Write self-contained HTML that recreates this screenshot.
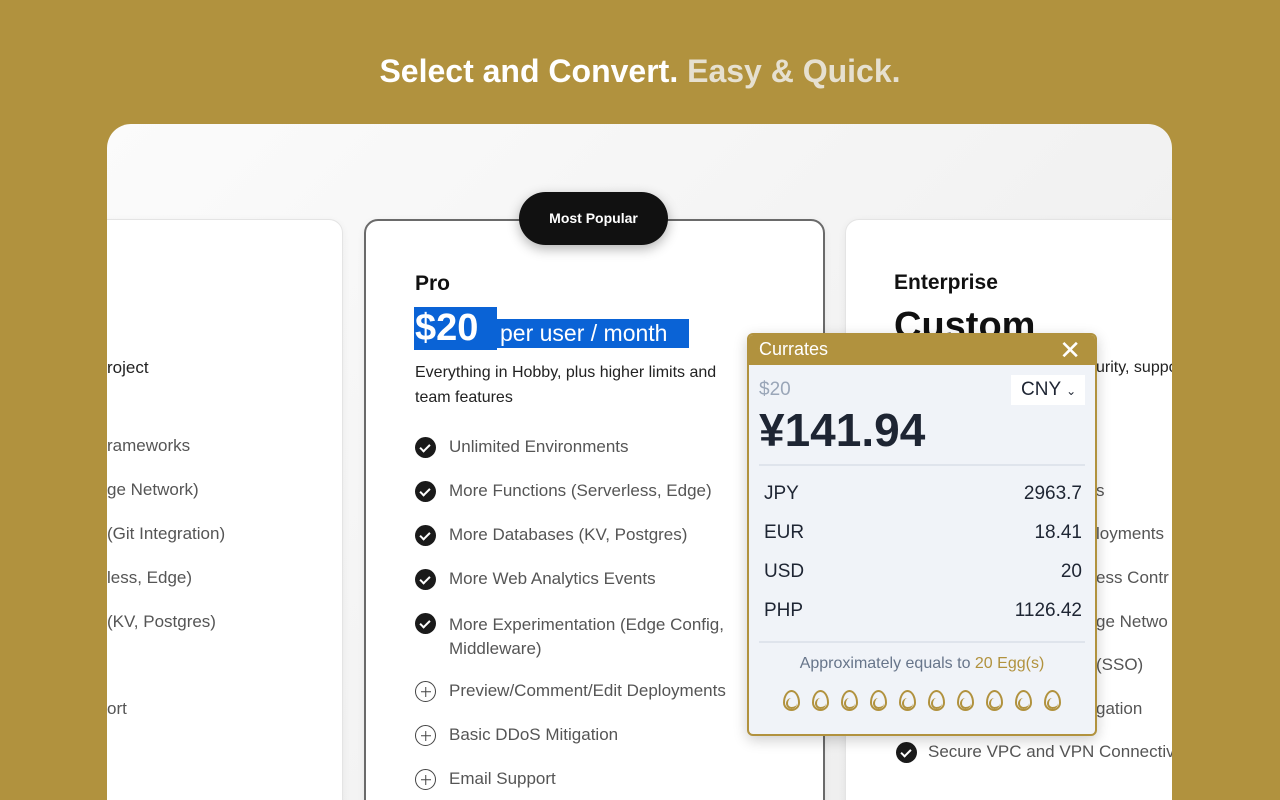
<!DOCTYPE html>
<html><head><meta charset="utf-8"><style>
*{margin:0;padding:0;box-sizing:border-box}
html,body{width:1280px;height:800px;overflow:hidden}
body{background:#b1923e;font-family:"Liberation Sans",sans-serif;position:relative}
h1{position:absolute;top:53px;left:0;width:1280px;text-align:center;color:#fff;font-size:32px;font-weight:bold}
h1 span{color:#e6e0d0}
.win{position:absolute;left:107px;top:124px;width:1065px;height:676px;border-radius:24px 24px 0 0;background:linear-gradient(135deg,#fbfbfb,#ececec);overflow:hidden}
.card{position:absolute;top:95px;height:600px;background:#fff;border-radius:14px;border:1px solid #e4e4e4;box-shadow:0 2px 8px rgba(0,0,0,.06)}
.clip{position:absolute;left:107px;top:124px;width:1065px;height:676px;overflow:hidden}
.t{position:absolute;font-size:17px;color:#555;white-space:nowrap}
.d{color:#222}
.ic{position:absolute;width:21px;height:21px;border-radius:50%}
.ck{background:#1a1a1a}
.ck:after{content:"";position:absolute;left:7px;top:5px;width:4px;height:8px;border:solid #fff;border-width:0 2px 2px 0;transform:rotate(45deg)}
.pl{border:1.5px solid #444}
.pl:before,.pl:after{content:"";position:absolute;background:#444;left:50%;top:50%;transform:translate(-50%,-50%)}
.pl:before{width:10px;height:1.5px}.pl:after{width:1.5px;height:10px}
.badge{position:absolute;left:412px;top:68px;width:149px;height:53px;border-radius:27px;background:#111;color:#fff;font-weight:bold;font-size:14px;text-align:center;line-height:53px;box-shadow:0 4px 12px rgba(0,0,0,.3)}
.pop{position:absolute;left:747px;top:333px;width:350px;height:403px;border:2px solid #b1923e;border-radius:6px;background:#f0f3f8;overflow:hidden;box-shadow:0 4px 14px rgba(0,0,0,.2)}
.ph{height:30px;background:#b1923e;color:#fff;font-size:18px;padding:4px 10px}
.row{position:absolute;left:15px;right:13px;font-size:19px;color:#1e2533;display:flex;justify-content:space-between}
.egg{display:inline-block;width:17px;height:21px;border:2.5px solid #b1923e;border-radius:50% 50% 50% 50%/60% 60% 40% 40%;margin:0 6px;position:relative;overflow:hidden}
.egg:after{content:"";position:absolute;left:1px;top:6px;width:9px;height:9px;border-radius:50%;border-left:2px solid #b1923e;border-bottom:2px solid #b1923e}
</style></head><body>
<h1>Select and Convert. <span>Easy &amp; Quick.</span></h1>
<div class="win">
 <div class="card" style="left:-60px;width:296px"></div>
 <div class="card" style="left:257px;width:461px;border:2px solid #6a6a6a"></div>
 <div class="card" style="left:738px;width:400px"></div>
 <div class="badge">Most Popular</div>
</div>
<div class="clip">
<div style="position:absolute;left:-107px;top:-124px;width:1280px;height:800px">
<div class="t d" style="left:107px;top:358px">roject</div>
<div class="t" style="left:107px;top:436px">rameworks</div>
<div class="t" style="left:107px;top:480px">ge Network)</div>
<div class="t" style="left:107px;top:524px">(Git Integration)</div>
<div class="t" style="left:107px;top:568px">less, Edge)</div>
<div class="t" style="left:107px;top:612px">(KV, Postgres)</div>
<div class="t" style="left:107px;top:699px">ort</div>

<div class="t d" style="left:415px;top:272px;font-size:21px;font-weight:bold;color:#111">Pro</div>
<div style="position:absolute;left:414px;top:307px;height:43px;width:83px;background:#0a63d6;color:#fff;font-weight:bold;font-size:38px;line-height:43px;padding-left:1px">$20</div>
<div style="position:absolute;left:497px;top:319px;height:29px;width:192px;background:#0a63d6;color:#fff;font-size:23px;line-height:29px;padding-left:3px">per user / month</div>
<div class="t d" style="left:415px;top:360px;line-height:25px;font-size:16px">Everything in Hobby, plus higher limits and<br>team features</div>
<div class="ic ck" style="left:415px;top:437px"></div><div class="t" style="left:449px;top:437px">Unlimited Environments</div>
<div class="ic ck" style="left:415px;top:481px"></div><div class="t" style="left:449px;top:481px">More Functions (Serverless, Edge)</div>
<div class="ic ck" style="left:415px;top:525px"></div><div class="t" style="left:449px;top:525px">More Databases (KV, Postgres)</div>
<div class="ic ck" style="left:415px;top:569px"></div><div class="t" style="left:449px;top:569px">More Web Analytics Events</div>
<div class="ic ck" style="left:415px;top:613px"></div><div class="t" style="left:449px;top:613px;line-height:24px">More Experimentation (Edge Config,<br>Middleware)</div>
<div class="ic pl" style="left:415px;top:681px"></div><div class="t" style="left:449px;top:681px">Preview/Comment/Edit Deployments</div>
<div class="ic pl" style="left:415px;top:725px"></div><div class="t" style="left:449px;top:725px">Basic DDoS Mitigation</div>
<div class="ic pl" style="left:415px;top:769px"></div><div class="t" style="left:449px;top:769px">Email Support</div>

<div class="t d" style="left:894px;top:271px;font-size:21px;font-weight:bold;color:#111">Enterprise</div>
<div class="t d" style="left:894px;top:305px;font-size:38px;font-weight:bold;color:#111">Custom</div>
<div class="t d" style="left:1096px;top:359px;font-size:16px">urity, suppo</div>
<div class="t" style="left:1096px;top:481px">s</div>
<div class="t" style="left:1096px;top:524px">loyments</div>
<div class="t" style="left:1096px;top:568px">ess Contr</div>
<div class="t" style="left:1096px;top:612px">ge Netwo</div>
<div class="t" style="left:1096px;top:655px">(SSO)</div>
<div class="t" style="left:1096px;top:699px">gation</div>
<div class="ic ck" style="left:896px;top:742px"></div><div class="t" style="left:928px;top:742px">Secure VPC and VPN Connectiv</div>
</div></div>

<div class="pop">
 <div class="ph">Currates<span style="position:absolute;right:14px;top:0px;font-size:26px;line-height:30px">✕</span></div>
 <div style="position:absolute;left:10px;top:44px;font-size:19px;color:#9aa6b8">$20</div>
 <div style="position:absolute;right:10px;top:40px;width:74px;height:30px;background:#fff;font-size:19px;color:#1e2533;padding:4px 0 0 10px">CNY <span style="font-size:12px">⌄</span></div>
 <div style="position:absolute;left:10px;top:68px;font-size:46px;font-weight:bold;color:#1e2533">¥141.94</div>
 <div style="position:absolute;left:10px;right:10px;top:129px;height:2px;background:#dfe4ec"></div>
 <div class="row" style="top:148px"><span>JPY</span><span>2963.7</span></div>
 <div class="row" style="top:187px"><span>EUR</span><span>18.41</span></div>
 <div class="row" style="top:226px"><span>USD</span><span>20</span></div>
 <div class="row" style="top:265px"><span>PHP</span><span>1126.42</span></div>
 <div style="position:absolute;left:10px;right:10px;top:306px;height:2px;background:#dfe4ec"></div>
 <div style="position:absolute;left:0;right:0;top:320px;text-align:center;font-size:16px;color:#67758a">Approximately equals to <span style="color:#b1923e">20 Egg(s)</span></div>
 <div style="position:absolute;left:0;right:0;top:355px;text-align:center"><span class="egg"></span><span class="egg"></span><span class="egg"></span><span class="egg"></span><span class="egg"></span><span class="egg"></span><span class="egg"></span><span class="egg"></span><span class="egg"></span><span class="egg"></span></div>
</div>
</body></html>
